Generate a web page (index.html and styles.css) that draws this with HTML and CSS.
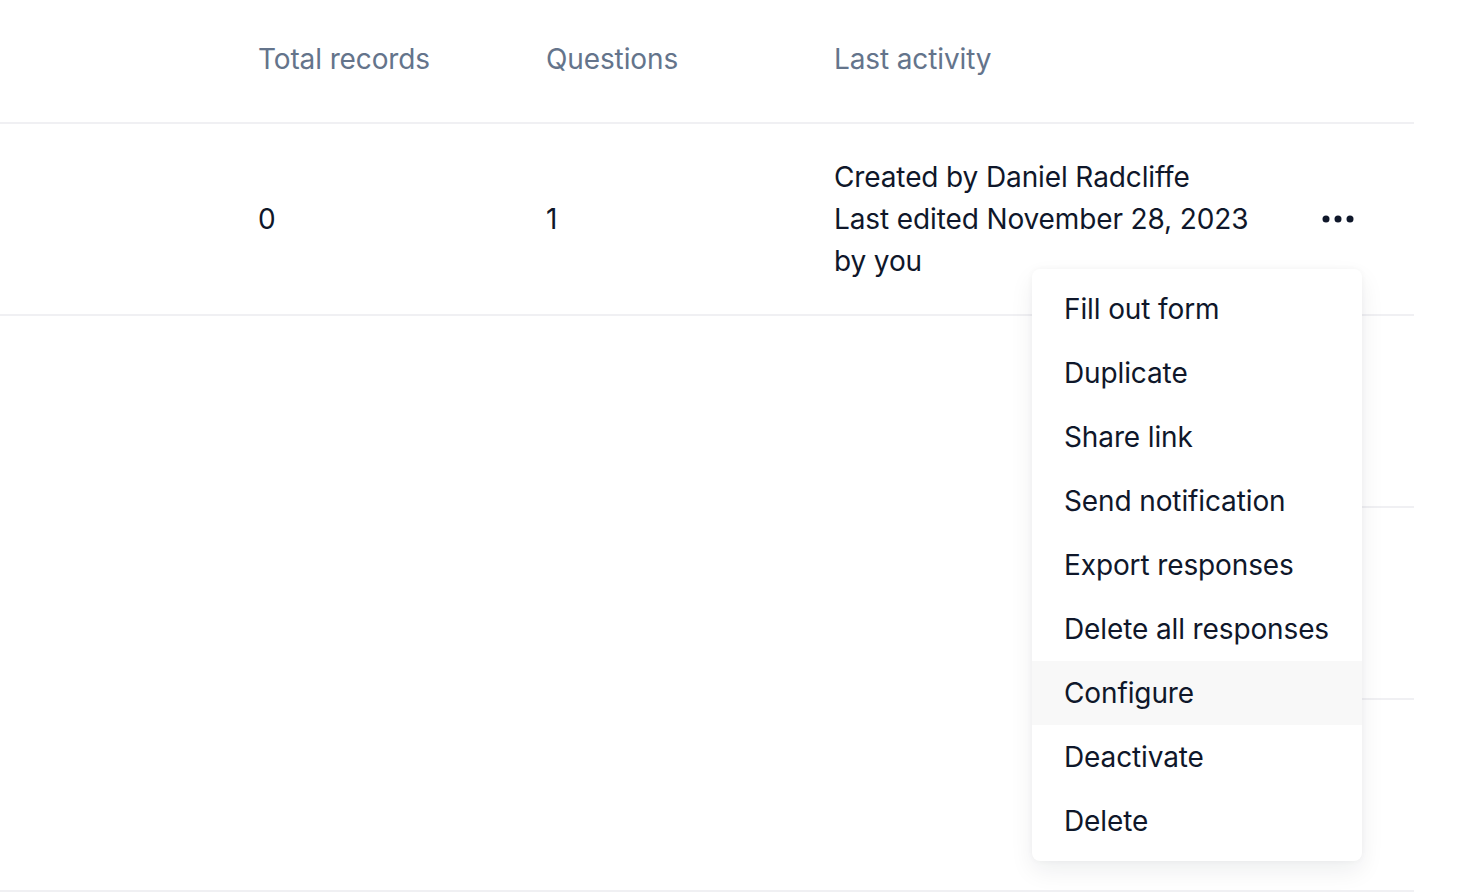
FILE: index.html
```html
<!DOCTYPE html>
<html lang="en">
<head>
    <meta charset="UTF-8">
    <meta name="viewport" content="width=device-width, initial-scale=1.0">
    <title>Forms</title>
    <link rel="stylesheet" href="styles.css">
</head>
<body>
    <div class="table">
        <div class="row head">
            <div class="cell"></div>
            <div class="cell">Total records</div>
            <div class="cell">Questions</div>
            <div class="cell">Last activity</div>
            <div class="cell"></div>
        </div>
        <div class="row">
            <div class="cell"></div>
            <div class="cell">0</div>
            <div class="cell">1</div>
            <div class="cell activity">
                <span>Created by Daniel Radcliffe</span>
                <span>Last edited November 28, 2023</span>
                <span>by you</span>
            </div>
            <div class="cell actions">
                <button class="more" type="button" aria-label="More actions">
                    <svg width="34" height="8" viewBox="0 0 34 8">
                        <circle cx="4" cy="4" r="3.5" fill="#0f172a"/>
                        <circle cx="16" cy="4" r="3.5" fill="#0f172a"/>
                        <circle cx="28" cy="4" r="3.5" fill="#0f172a"/>
                    </svg>
                </button>
            </div>
        </div>
        <div class="row empty">
            <div class="cell"></div><div class="cell"></div><div class="cell"></div><div class="cell"></div>
            <div class="cell edge"></div>
        </div>
        <div class="row empty">
            <div class="cell"></div><div class="cell"></div><div class="cell"></div><div class="cell"></div>
            <div class="cell edge"></div>
        </div>
        <div class="row last"></div>

        <ul class="menu">
            <li>Fill out form</li>
            <li>Duplicate</li>
            <li>Share link</li>
            <li>Send notification</li>
            <li>Export responses</li>
            <li>Delete all responses</li>
            <li class="active">Configure</li>
            <li>Deactivate</li>
            <li>Delete</li>
        </ul>
    </div>
</body>
</html>
```

FILE: styles.css
```css
body {
    margin: 0;
    font-family: Inter, "Noto Sans", sans-serif;
    color: #0f172a;
    background: #fff;
    letter-spacing: -0.12px;
}
.table {
    position: relative;
    width: 1414px;
}
.row {
    display: grid;
    grid-template-columns: 258px 288px 288px 456px 124px;
    align-items: center;
    height: 190px;
    border-bottom: 2px solid #f0f0f3;
    font-size: 28px;
    line-height: 42px;
}
.row.head {
    height: 118px;
    padding-bottom: 4px;
    color: #64748b;
}
.row.empty {
    height: 192px;
    border-bottom: none;
    align-items: stretch;
}
.row.empty .edge {
    border-bottom: 2px solid #f0f0f3;
}
.activity span {
    display: block;
    white-space: nowrap;
}
.actions {
    padding-left: 32px;
}
.more {
    display: block;
    padding: 0;
    border: none;
    background: none;
    line-height: 0;
}
.menu {
    position: absolute;
    top: 269px;
    left: 1032px;
    width: 330px;
    margin: 0;
    padding: 8px 0;
    list-style: none;
    background: #fff;
    border-radius: 8px;
    box-shadow: 0 10px 24px rgba(15, 23, 42, 0.07), 0 0 6px rgba(15, 23, 42, 0.04);
}
.menu li {
    height: 64px;
    padding-left: 32px;
    display: flex;
    align-items: center;
    font-size: 28px;
    white-space: nowrap;
}
.menu li.active {
    background: #f8f8f8;
}
```
